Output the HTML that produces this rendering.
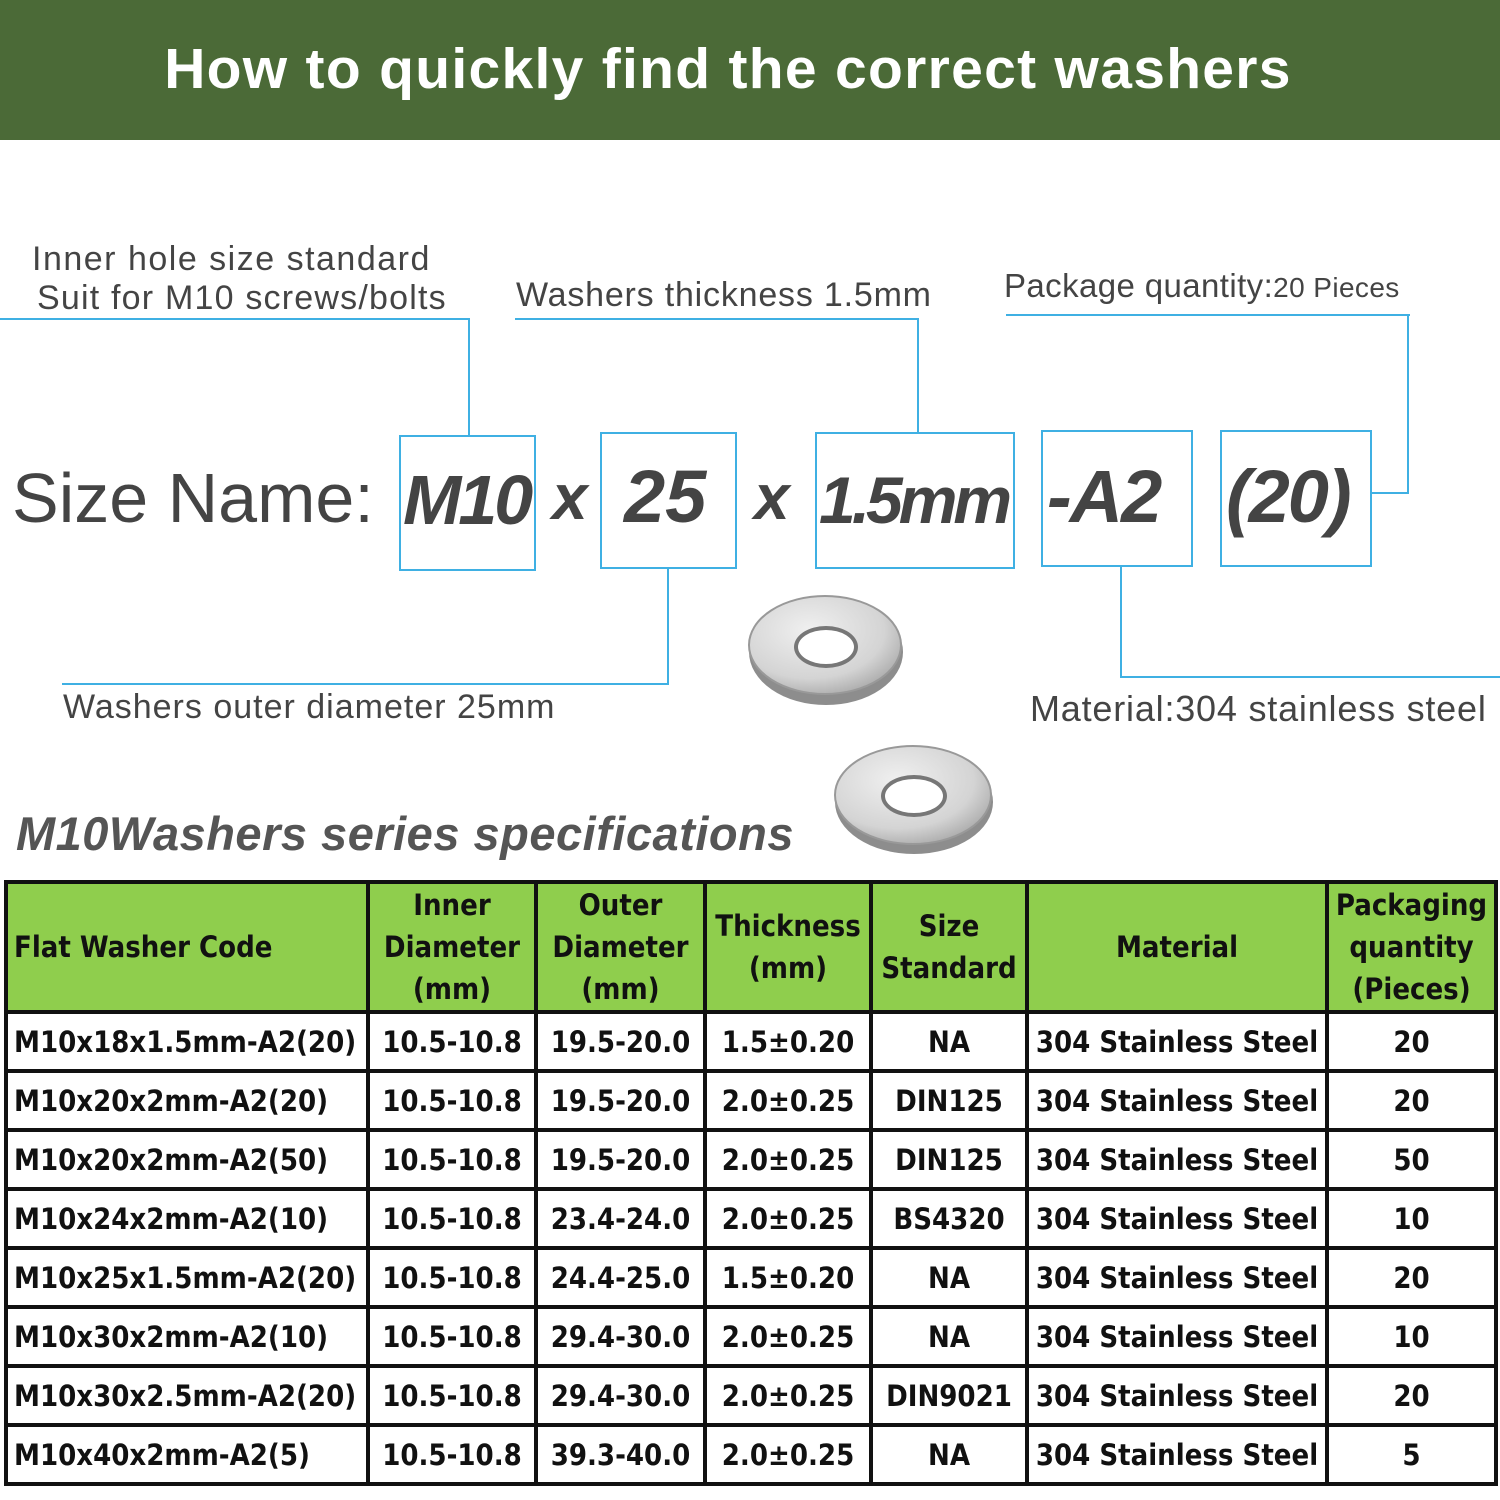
<!DOCTYPE html>
<html><head><meta charset="utf-8"><style>
*{margin:0;padding:0;box-sizing:border-box}
body{width:1500px;height:1500px;background:#fff;position:relative;overflow:hidden;font-family:"Liberation Sans",sans-serif}
.hdr{position:absolute;left:0;top:0;width:1500px;height:140px;background:#4b6a37;color:#fff;font-weight:bold;font-size:57px;text-align:center;line-height:138px;letter-spacing:1.3px;padding-right:44px}
.t{position:absolute;color:#444;font-size:34px;white-space:nowrap}
.box{position:absolute;border:2px solid #3fb0e3}
.big{position:absolute;font-style:italic;font-weight:bold;color:#444;font-size:74px;white-space:nowrap}
.ln{position:absolute;background:#3fb0e3}
table{position:absolute;left:4px;top:880px;border-collapse:collapse;font-family:"DejaVu Sans Condensed","DejaVu Sans",sans-serif;font-stretch:condensed;font-weight:bold;font-size:29px;color:#111;table-layout:fixed;width:1490px}
td{border:4px solid #111;text-align:center;height:59px;padding:0;white-space:nowrap;overflow:hidden}
tr.h td{background:#8fce4d;height:128px;line-height:42px}
td:first-child{text-align:left;padding-left:6px}
</style></head><body>
<div class="hdr">How to quickly find the correct washers</div>

<div class="t" style="left:32px;top:240px;letter-spacing:1.5px">Inner hole size standard</div>
<div class="t" style="left:37px;top:279px;letter-spacing:1.2px">Suit for M10 screws/bolts</div>
<div class="t" style="left:516px;top:276px;letter-spacing:.8px">Washers thickness 1.5mm</div>
<div class="t" style="left:1004px;top:267px;font-size:33px;letter-spacing:.4px">Package quantity:<span style="font-size:28px">20 Pieces</span></div>
<div class="t" style="left:63px;top:688px;letter-spacing:1px">Washers outer diameter 25mm</div>
<div class="t" style="left:1030px;top:688px;font-size:36px;letter-spacing:.8px">Material:304 stainless steel</div>

<div class="ln" style="left:0;top:318px;width:470px;height:2px"></div>
<div class="ln" style="left:468px;top:318px;width:2px;height:118px"></div>
<div class="ln" style="left:515px;top:318px;width:404px;height:2px"></div>
<div class="ln" style="left:917px;top:318px;width:2px;height:115px"></div>
<div class="ln" style="left:1006px;top:314px;width:404px;height:2px"></div>
<div class="ln" style="left:1407px;top:314px;width:2px;height:180px"></div>
<div class="ln" style="left:1372px;top:492px;width:37px;height:2px"></div>
<div class="ln" style="left:667px;top:568px;width:2px;height:117px"></div>
<div class="ln" style="left:62px;top:683px;width:607px;height:2px"></div>
<div class="ln" style="left:1120px;top:566px;width:2px;height:112px"></div>
<div class="ln" style="left:1120px;top:676px;width:380px;height:2px"></div>

<div class="t" style="left:12px;top:458px;font-size:70px;color:#444">Size Name:</div>
<div class="box" style="left:399px;top:435px;width:137px;height:136px"></div>
<div class="box" style="left:600px;top:432px;width:137px;height:137px"></div>
<div class="box" style="left:815px;top:432px;width:200px;height:137px"></div>
<div class="box" style="left:1041px;top:430px;width:152px;height:137px"></div>
<div class="box" style="left:1220px;top:430px;width:152px;height:137px"></div>
<div class="big" style="left:403px;top:460px;font-size:70px;letter-spacing:-3px">M10</div>
<div class="big" style="left:552px;top:460px;font-size:64px">x</div>
<div class="big" style="left:624px;top:454px">25</div>
<div class="big" style="left:754px;top:460px;font-size:64px">x</div>
<div class="big" style="left:819px;top:462px;font-size:66px;letter-spacing:-4px">1.5mm</div>
<div class="big" style="left:1047px;top:454px;letter-spacing:-2px">-A2</div>
<div class="big" style="left:1226px;top:454px;letter-spacing:-2px">(20)</div>

<svg style="position:absolute;left:740px;top:590px" width="270" height="270">
<defs><radialGradient id="g" cx="40%" cy="35%" r="70%"><stop offset="0" stop-color="#f0f0f0"/><stop offset=".7" stop-color="#d4d4d4"/><stop offset="1" stop-color="#aaa"/></radialGradient></defs>
<ellipse cx="86" cy="62" rx="77" ry="53" fill="#8d8d8d"/>
<ellipse cx="85" cy="55" rx="76" ry="49" fill="url(#g)" stroke="#999" stroke-width="2"/>
<ellipse cx="86" cy="57" rx="32" ry="21" fill="#777"/>
<ellipse cx="86" cy="57" rx="28" ry="17" fill="#fff"/>
<ellipse cx="174" cy="212" rx="79" ry="52" fill="#8d8d8d"/>
<ellipse cx="173" cy="205" rx="78" ry="49" fill="url(#g)" stroke="#999" stroke-width="2"/>
<ellipse cx="174" cy="206" rx="33" ry="21" fill="#777"/>
<ellipse cx="174" cy="206" rx="29" ry="17" fill="#fff"/>
</svg>

<div class="t" style="left:16px;top:806px;font-size:47px;font-weight:bold;font-style:italic;color:#555;letter-spacing:.5px">M10Washers series specifications</div>

<table>
<colgroup><col style="width:362px"><col style="width:168px"><col style="width:169px"><col style="width:166px"><col style="width:156px"><col style="width:300px"><col style="width:169px"></colgroup>
<tr class="h"><td>Flat Washer Code</td><td>Inner<br>Diameter<br>(mm)</td><td>Outer<br>Diameter<br>(mm)</td><td>Thickness<br>(mm)</td><td>Size<br>Standard</td><td>Material</td><td>Packaging<br>quantity<br>(Pieces)</td></tr>
<tr><td>M10x18x1.5mm-A2(20)</td><td>10.5-10.8</td><td>19.5-20.0</td><td>1.5±0.20</td><td>NA</td><td>304 Stainless Steel</td><td>20</td></tr>
<tr><td>M10x20x2mm-A2(20)</td><td>10.5-10.8</td><td>19.5-20.0</td><td>2.0±0.25</td><td>DIN125</td><td>304 Stainless Steel</td><td>20</td></tr>
<tr><td>M10x20x2mm-A2(50)</td><td>10.5-10.8</td><td>19.5-20.0</td><td>2.0±0.25</td><td>DIN125</td><td>304 Stainless Steel</td><td>50</td></tr>
<tr><td>M10x24x2mm-A2(10)</td><td>10.5-10.8</td><td>23.4-24.0</td><td>2.0±0.25</td><td>BS4320</td><td>304 Stainless Steel</td><td>10</td></tr>
<tr><td>M10x25x1.5mm-A2(20)</td><td>10.5-10.8</td><td>24.4-25.0</td><td>1.5±0.20</td><td>NA</td><td>304 Stainless Steel</td><td>20</td></tr>
<tr><td>M10x30x2mm-A2(10)</td><td>10.5-10.8</td><td>29.4-30.0</td><td>2.0±0.25</td><td>NA</td><td>304 Stainless Steel</td><td>10</td></tr>
<tr><td>M10x30x2.5mm-A2(20)</td><td>10.5-10.8</td><td>29.4-30.0</td><td>2.0±0.25</td><td>DIN9021</td><td>304 Stainless Steel</td><td>20</td></tr>
<tr><td>M10x40x2mm-A2(5)</td><td>10.5-10.8</td><td>39.3-40.0</td><td>2.0±0.25</td><td>NA</td><td>304 Stainless Steel</td><td>5</td></tr>
</table>
</body></html>
